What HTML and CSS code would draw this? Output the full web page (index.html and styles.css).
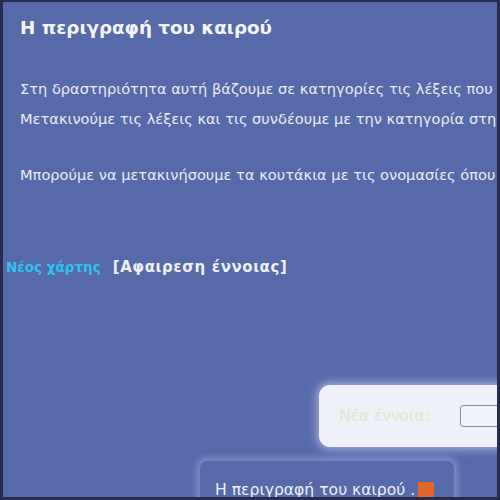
FILE: index.html
```html
<!DOCTYPE html>
<html lang="el">
<head>
<meta charset="utf-8">
<link rel="stylesheet" href="styles.css">
</head>
<body>
<div class="frame">
  <h1 class="title">Η περιγραφή του καιρού</h1>
  <div class="intro">
    <p class="line">Στη δραστηριότητα αυτή βάζουμε σε κατηγορίες τις λέξεις που περιγράφουν τον καιρό.</p>
    <p class="line">Μετακινούμε τις λέξεις και τις συνδέουμε με την κατηγορία στην οποία ανήκουν.</p>
    <p class="line gap">Μπορούμε να μετακινήσουμε τα κουτάκια με τις ονομασίες όπου θέλουμε.</p>
  </div>
  <div class="actions">
    <a class="new-map">Νέος χάρτης</a>
    <a class="remove">[Αφαιρεση έννοιας]</a>
  </div>
  <div class="canvas">
    <div class="new-concept">
      <span class="nc-label">Νέα έννοια:</span>
      <span class="nc-input"></span>
    </div>
    <div class="node">
      <span class="node-text">Η περιγραφή του καιρού .</span>
      <span class="node-handle"></span>
    </div>
  </div>
</div>
</body>
</html>
```
FILE: styles.css
```css
html, body {
  margin: 0;
  padding: 0;
  width: 500px;
  height: 500px;
  overflow: hidden;
  background: #2a3158;
}
.frame {
  position: relative;
  box-sizing: border-box;
  width: 500px;
  height: 500px;
  border-style: solid;
  border-color: #262c4c;
  border-width: 2px 3px 3px 3px;
  background: #5669a9;
  overflow: hidden;
  font-family: "DejaVu Sans", Verdana, sans-serif;
  color: #eef0f8;
}
.title {
  margin: 0;
  padding: 15px 0 0 17px;
  font-size: 18.3px;
  font-weight: bold;
  line-height: 22px;
  color: #f4f5fa;
}
.intro {
  padding: 41px 0 0 17px;
}
.line {
  margin: 0 0 12px 0;
  font-size: 14.6px;
  line-height: 18px;
  white-space: nowrap;
  color: #e9ecf6;
}
.line.gap {
  margin-top: 38px;
}
.actions {
  display: flex;
  gap: 12px;
  padding: 62px 0 0 3px;
  font-size: 13.5px;
  font-weight: bold;
  line-height: 18px;
}
.new-map {
  color: #2fc2f0;
}
.remove {
  color: #eef0f8;
  font-size: 15px;
  letter-spacing: 0.6px;
}
.canvas {
  position: absolute;
  inset: 0;
}
.new-concept {
  position: absolute;
  left: 316px;
  top: 383px;
  width: 220px;
  height: 62px;
  border-radius: 11px;
  background: #eef0fa;
  box-shadow: 0 0 8px 3px rgba(215, 222, 245, 0.55);
  display: flex;
  align-items: center;
  gap: 30px;
  padding-left: 20px;
  box-sizing: border-box;
}
.nc-label {
  flex-shrink: 0;
  white-space: nowrap;
  font-size: 15.5px;
  color: #e6e6c9;
}
.nc-input {
  flex-shrink: 0;
  width: 80px;
  height: 20px;
  border: 1px solid #8d8f98;
  border-radius: 3px;
  background: #f2f3f8;
}
.node {
  position: absolute;
  left: 195px;
  top: 457px;
  width: 258px;
  height: 60px;
  box-sizing: border-box;
  border: 2px solid #7283bd;
  border-radius: 9px;
  background: #5669a9;
  box-shadow: 0 0 6px 2px rgba(150, 165, 215, 0.55);
  display: flex;
  align-items: flex-start;
  padding: 19px 0 0 15px;
  gap: 3px;
}
.node-text {
  white-space: nowrap;
  font-size: 15.6px;
  line-height: 20px;
  color: #eef0f8;
}
.node-handle {
  flex-shrink: 0;
  width: 16px;
  height: 16px;
  background: #e0662a;
  margin-top: 2px;
}
```
